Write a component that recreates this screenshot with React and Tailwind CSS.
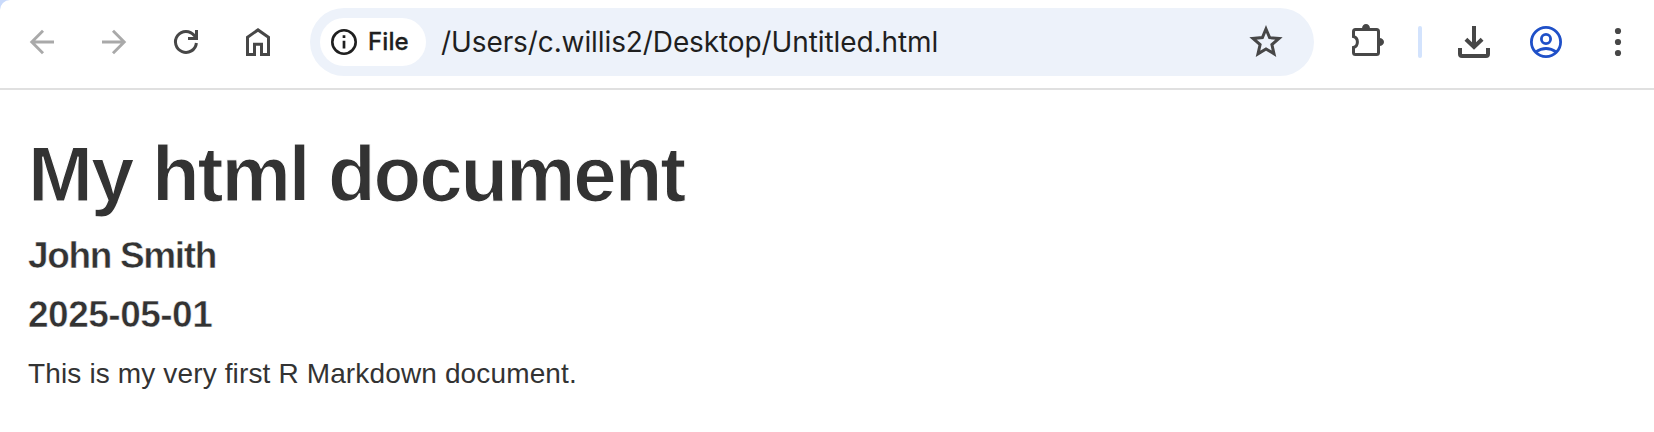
import React from "react";

function Icon({ className = "text-[#474747]", children }) {
  return (
    <div className={`flex w-[72px] shrink-0 items-center justify-center ${className}`}>
      <svg width="48" height="48" viewBox="0 0 48 48" fill="none" stroke="currentColor" strokeWidth="3">
        {children}
      </svg>
    </div>
  );
}

function Toolbar() {
  return (
    <header className="flex h-[90px] items-stretch border-b-2 border-[#e0e0e0] bg-white pt-2 pb-3 pl-1.5 rounded-tl-[10px]">
      <Icon className="text-[#a9a9a9]">
        <path d="M36 24H14M25 12.8L13.8 24L25 35.2" strokeWidth="2.9" />
      </Icon>
      <Icon className="text-[#a9a9a9]">
        <path d="M12 24H34M23 12.8L34.2 24L23 35.2" strokeWidth="2.9" />
      </Icon>
      <Icon>
        <path d="M34.4 25A10.5 10.5 0 1 1 32.3 17.5L34 20" strokeWidth="3" />
        <path d="M34.5 12V20.5H26" />
      </Icon>
      <Icon>
        <path d="M13.5 36.5V19.2L24 11.9L34.5 19.2V36.5H27.5V26.3H20.5V36.5Z" />
      </Icon>

      <div className="ml-4 flex w-[1004px] shrink-0 items-center rounded-full bg-[#edf2fa] pl-2.5 pr-3">
        <div className="flex h-12 w-[106px] items-center rounded-full bg-white pl-2.5 text-[#1f1f1f]">
          <svg width="28" height="28" viewBox="0 0 28 28" fill="none" stroke="currentColor">
            <circle cx="14" cy="14" r="11.7" strokeWidth="2.6" />
            <path d="M14 12.7V20.5M14 7.2V10" strokeWidth="2.7" />
          </svg>
          <span className="ml-2.5 font-['Inter',sans-serif] text-[24px] font-medium leading-8 tracking-[0.1px] [-webkit-text-stroke:0.3px_#1f1f1f]">File</span>
        </div>
        <div className="ml-[15px] whitespace-nowrap font-['Inter',sans-serif] text-[28px] leading-8 tracking-[-0.1px] text-[#1f1f1f]">
          /Users/c.willis2/Desktop/Untitled.html
        </div>
        <div className="ml-auto flex">
          <Icon>
            <path
              d="M24 11L27.6 19.6L37 20.4L29.9 26.6L32 35.8L24 30.9L16 35.8L18.1 26.6L11 20.4L20.4 19.6Z"
              strokeWidth="3"
            />
          </Icon>
        </div>
      </div>

      <div className="ml-[18px] flex">
        <Icon>
          <path d="M9.5 18.5V13.5a2 2 0 0 1 2-2H32.5a2 2 0 0 1 2 2V34.5a2 2 0 0 1-2 2H11.5a2 2 0 0 1-2-2V29.5C14.7 28 14.7 20 9.5 18.5Z" />
          <path d="M18 10.5a4 4.5 0 0 1 8 0ZM35.5 20a4.5 4 0 0 1 0 8Z" fill="currentColor" stroke="none" />
        </Icon>
      </div>
      <div className="mr-4 ml-3.5 h-8 w-1 self-center rounded-full bg-[#d3e3fd]" />
      <Icon>
        <path d="M10 30V36a2 2 0 0 0 2 2H36a2 2 0 0 0 2-2V30M24 8V29M15.9 21.2L24 29L32.1 21.2" strokeWidth="4" />
      </Icon>
      <Icon className="text-[#1f50c8]">
        <circle cx="24" cy="24" r="14.6" strokeWidth="2.8" />
        <circle cx="24" cy="21" r="4.6" strokeWidth="2.8" />
        <path d="M13.5 34.2Q24 26.8 34.5 34.2" strokeWidth="2.8" />
      </Icon>
      <Icon>
        <g fill="currentColor" stroke="none">
          <circle cx="24" cy="13" r="3.1" />
          <circle cx="24" cy="24" r="3.1" />
          <circle cx="24" cy="35" r="3.1" />
        </g>
      </Icon>
    </header>
  );
}

export default function App() {
  return (
    <div className="h-[432px] w-[1654px] overflow-hidden bg-white">
      <div className="bg-[#c9dafb]">
        <Toolbar />
      </div>
      <main className="whitespace-nowrap px-7 pt-[43px] font-['Liberation_Sans',Arial,sans-serif] text-[#333333]">
        <h1 className="text-[78px] font-bold leading-[82px] tracking-[-2.05px] [-webkit-text-stroke:1.2px_#ffffff]">My html document</h1>
        <h4 className="mt-[21px] text-[37px] font-bold leading-[40px] tracking-[-1.35px] [-webkit-text-stroke:0.5px_#ffffff]">John Smith</h4>
        <h4 className="mt-[19px] text-[37px] font-bold leading-[40px] tracking-[-0.5px] [-webkit-text-stroke:0.5px_#ffffff]">2025-05-01</h4>
        <p className="mt-[19px] text-[28px] leading-[40px] tracking-[0.14px]">This is my very first R Markdown document.</p>
      </main>
    </div>
  );
}
